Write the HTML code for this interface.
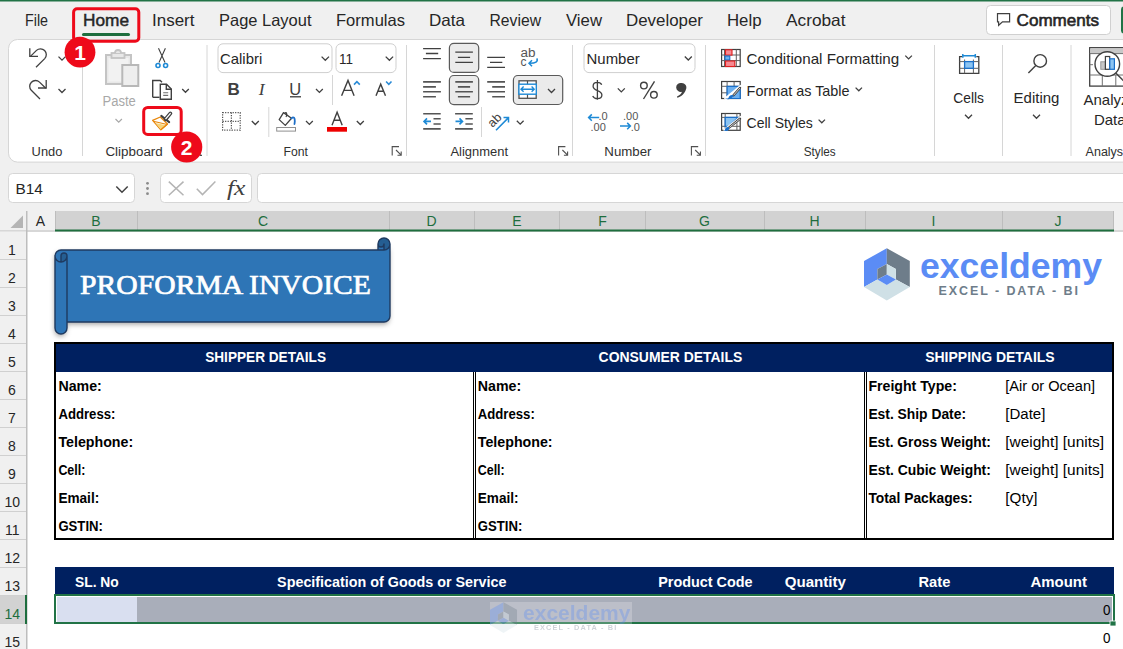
<!DOCTYPE html>
<html><head><meta charset="utf-8"><style>
html,body{margin:0;padding:0;background:#fff;}
#root{position:relative;width:1123px;height:649px;overflow:hidden;background:#fff;font-family:"Liberation Sans",sans-serif;}
svg{position:absolute;left:0;top:0;}
text{white-space:pre;}
</style></head><body><div id="root">
<svg width="1123" height="649" viewBox="0 0 1123 649">
<!-- top chrome background -->
<rect x="0" y="0" width="1123" height="232" fill="#f0f0f0"/>
<rect x="0" y="0" width="1123" height="1.5" fill="#217346"/>
<!-- comments button -->
<rect x="986.5" y="5.5" width="124" height="29" rx="4" fill="#ffffff" stroke="#d0d0d0" stroke-width="1"/>
<rect x="1121" y="6.5" width="8" height="27" rx="3" fill="#217346"/>
<!-- home tab highlight underline -->
<rect x="82" y="33" width="48" height="3" rx="1.5" fill="#1e6e3e"/>
<!-- ribbon panel -->
<rect x="8.5" y="39.5" width="1130" height="122.6" rx="9" fill="#ffffff" stroke="#d6d6d6" stroke-width="1"/>
<rect x="218" y="43.8" width="114" height="28.8" rx="5" fill="#fff" stroke="#cfcfcf" stroke-width="1"/>
<rect x="336" y="43.8" width="60" height="28.8" rx="5" fill="#fff" stroke="#cfcfcf" stroke-width="1"/>
<rect x="584" y="43.8" width="111" height="28.8" rx="5" fill="#fff" stroke="#cfcfcf" stroke-width="1"/>
<!-- group separators -->
<g stroke="#d6d6d6" stroke-width="1">
<line x1="82.5" y1="45" x2="82.5" y2="156"/>
<line x1="207" y1="45" x2="207" y2="156"/>
<line x1="406.5" y1="45" x2="406.5" y2="156"/>
<line x1="572.5" y1="45" x2="572.5" y2="156"/>
<line x1="705.5" y1="45" x2="705.5" y2="156"/>
<line x1="934.5" y1="45" x2="934.5" y2="156"/>
<line x1="1002.5" y1="45" x2="1002.5" y2="156"/>
<line x1="1071" y1="45" x2="1071" y2="156"/>
</g>
<!-- formula bar -->
<rect x="8.5" y="173.5" width="126" height="29" rx="4" fill="#ffffff" stroke="#d6d6d6"/>
<rect x="160.5" y="173.5" width="91" height="29" rx="4" fill="#ffffff" stroke="#d6d6d6"/>
<rect x="257.5" y="173.5" width="880" height="29" rx="4" fill="#ffffff" stroke="#d6d6d6"/>
<!-- column headers -->
<rect x="55" y="211" width="1059" height="20" fill="#d2d2d2"/>
<g stroke="#bdbdbd" stroke-width="1">
<line x1="55.5" y1="211" x2="55.5" y2="231"/>
<line x1="137.5" y1="211" x2="137.5" y2="231"/>
<line x1="389.5" y1="211" x2="389.5" y2="231"/>
<line x1="474.5" y1="211" x2="474.5" y2="231"/>
<line x1="559.5" y1="211" x2="559.5" y2="231"/>
<line x1="645.5" y1="211" x2="645.5" y2="231"/>
<line x1="764.5" y1="211" x2="764.5" y2="231"/>
<line x1="865.5" y1="211" x2="865.5" y2="231"/>
<line x1="1002.5" y1="211" x2="1002.5" y2="231"/>
<line x1="1113.5" y1="211" x2="1113.5" y2="231"/>
</g>
<rect x="0" y="230.5" width="1123" height="1" fill="#bdbdbd"/>
<rect x="55" y="229.5" width="1059" height="2" fill="#1e6e3e"/>
<polygon points="23,215.5 23,228 10.5,228" fill="#b4b4b4"/>
<!-- row headers -->
<rect x="0" y="231.5" width="26" height="420" fill="#f0f0f0"/>
<rect x="26" y="211" width="1.5" height="440" fill="#bdbdbd"/>
<g fill="#d0d0d0">
<rect x="0" y="259" width="26" height="1"/><rect x="0" y="287" width="26" height="1"/><rect x="0" y="315" width="26" height="1"/>
<rect x="0" y="343" width="26" height="1"/><rect x="0" y="371" width="26" height="1"/><rect x="0" y="399" width="26" height="1"/>
<rect x="0" y="427" width="26" height="1"/><rect x="0" y="455" width="26" height="1"/><rect x="0" y="483" width="26" height="1"/>
<rect x="0" y="511" width="26" height="1"/><rect x="0" y="539" width="26" height="1"/><rect x="0" y="567" width="26" height="1"/>
<rect x="0" y="595" width="26" height="1"/><rect x="0" y="623" width="26" height="1"/>
</g>
<rect x="0" y="596" width="25" height="27" fill="#d2d2d2"/>
<rect x="25" y="595" width="2" height="29" fill="#1e6e3e"/>

<!-- details table -->
<rect x="55" y="343" width="1058" height="196" fill="#ffffff" stroke="#000000" stroke-width="2"/>
<rect x="56" y="344" width="1056" height="28" fill="#002060"/>
<g fill="#000000">
<rect x="473" y="372" width="1" height="166"/><rect x="475" y="372" width="1" height="166"/>
<rect x="864" y="372" width="1" height="166"/><rect x="866" y="372" width="1" height="166"/>
</g>
<!-- items header -->
<rect x="55" y="567" width="1059" height="27" fill="#002060"/>
<!-- selection row 14 -->
<rect x="57" y="597" width="80" height="25" fill="#d9dff0"/>
<rect x="137" y="597" width="975" height="25" fill="#a9aeba"/>
<rect x="55" y="595" width="1059" height="28" fill="none" stroke="#217346" stroke-width="2"/>
<rect x="1110" y="621" width="6" height="5" fill="#217346" stroke="#ffffff" stroke-width="0.8"/>
<!-- banner -->
<defs>
<filter id="sh" x="-10%" y="-20%" width="120%" height="150%">
<feDropShadow dx="-0.5" dy="2.5" stdDeviation="2.5" flood-color="#000" flood-opacity="0.35"/>
</filter>
<g id="logo">
<polygon points="886.8,248.2 864,261.1 864,287 877.4,279.6 877.4,269 886.8,263.9" fill="#5b8cf5"/>
<polygon points="886.8,248.2 909.8,261.1 909.8,287 895.9,279.6 895.9,269 886.8,263.9" fill="#6e7d8a"/>
<polygon points="864,287 886.8,300.4 909.8,287 895.9,279.6 886.8,285.1 877.4,279.6" fill="#cfe0e6"/>
<polygon points="877.4,269 886.8,263.9 886.8,274.5 877.4,279.6" fill="#6e7d8a"/>
<polygon points="886.8,263.9 895.9,269 895.9,279.6 886.8,274.5" fill="#cfe0e6"/>
<polygon points="877.4,279.6 886.8,274.5 895.9,279.6 886.8,285.1" fill="#5b8cf5"/>
<text x="920" y="278.2" font-family="Liberation Sans" font-weight="700" font-size="35" fill="#5b8cf5" textLength="182" lengthAdjust="spacingAndGlyphs">exceldemy</text>
<text x="938.4" y="295.1" font-family="Liberation Sans" font-weight="700" font-size="12.5" fill="#6e7d8a" textLength="139.5" lengthAdjust="spacing">EXCEL - DATA - BI</text>
</g>
</defs>
<g transform="translate(55,238)" filter="url(#sh)">
<path d="M335,6 A6,6 0 0 1 329,12 L329,6 A3,3 0 0 1 323,6 L323,12 L6,12 A6,6 0 0 0 0,18 L0,90 A6,6 0 0 0 12,90 L12,84 L329,84 A6,6 0 0 0 335,78 Z M6,24 A6,6 0 0 0 12,18 A3,3 0 0 0 6,18 Z" fill="#2e75b6" fill-rule="nonzero"/>
</g>
<g transform="translate(55,238)">
<path d="M0,18 A6,6 0 0 1 6,12 L323,12 L323,6 A6,6 0 0 1 335,6 L335,78 A6,6 0 0 1 329,84 L12,84 L12,90 A6,6 0 0 1 0,90 Z" fill="#2e75b6"/>
<path d="M329,12 A6,6 0 1 0 323,6 A3,3 0 0 0 329,6 Z" fill="#255e92"/>
<path d="M6,24 A6,6 0 0 0 12,18 A3,3 0 0 0 6,18 Z" fill="#255e92"/>
<path d="M0,18 A6,6 0 0 1 6,12 L323,12 L323,6 A6,6 0 0 1 335,6 L335,78 A6,6 0 0 1 329,84 L12,84 L12,90 A6,6 0 0 1 0,90 Z M323,12 L329,12 A6,6 0 0 0 335,6 M329,12 L329,6 A3,3 0 0 1 323,6 M6,24 L6,18 A3,3 0 0 1 12,18 A6,6 0 0 1 0,18 M12,18 L12,84" fill="none" stroke="#1f3a60" stroke-width="1.4" stroke-linejoin="round"/>
</g>
<use href="#logo"/>
<!-- watermark -->
<rect x="490" y="602" width="142" height="31" fill="#ffffff" opacity="0.22"/>
<g opacity="0.33" transform="translate(-19.76,455.7) scale(0.59)"><use href="#logo"/></g>

<rect x="449.4" y="43.3" width="29.3" height="29.1" rx="4.5" fill="#ebebeb" stroke="#5a5a5a" stroke-width="1.2"/>
<rect x="449.4" y="75.5" width="29.3" height="29.1" rx="4.5" fill="#ebebeb" stroke="#5a5a5a" stroke-width="1.2"/>
<rect x="513.4" y="75.5" width="49.3" height="29" rx="4.5" fill="#ebebeb" stroke="#5a5a5a" stroke-width="1.2"/>
<g fill="none" stroke="#404040" stroke-width="1.3" stroke-linecap="butt" stroke-linejoin="miter">
<!-- undo -->
<path d="M29.8,48.3 V56.3 H38"/>
<path d="M30.2,56.6 L36.5,50.4 A5.8,5.8 0 0 1 44.7,58.6 L36,67.3"/>
<!-- redo -->
<path d="M46.2,80 V88 H38"/>
<path d="M45.8,88.3 L39.5,82.1 A5.8,5.8 0 0 0 31.3,90.3 L40,99"/>
<!-- chevrons -->
<path d="M58.5,56.6 L62,60.1 L65.5,56.6"/>
<path d="M58.5,89 L62,92.5 L65.5,89"/>
<path d="M182.2,89 L185.5,92.3 L188.8,89"/>
<path d="M321.6,56.6 L325.3,60.3 L329,56.6"/>
<path d="M385.7,56.6 L389.4,60.3 L393.1,56.6"/>
<path d="M316,89 L319.4,92.4 L322.8,89"/>
<path d="M251.8,121 L255.3,124.5 L258.8,121"/>
<path d="M306,121 L309.4,124.4 L312.8,121"/>
<path d="M356.8,121 L360.3,124.5 L363.8,121"/>
<path d="M548,89 L551.5,92.5 L555,89"/>
<path d="M516.8,120.8 L520.2,124.2 L523.6,120.8"/>
<path d="M684.8,56.5 L688.3,60 L691.8,56.5"/>
<path d="M617.8,88.4 L621.3,91.9 L624.8,88.4"/>
<path d="M905.3,55.6 L908.6,58.9 L911.9,55.6"/>
<path d="M855.6,87.6 L858.8,90.8 L862,87.6"/>
<path d="M818.6,119.6 L821.8,122.8 L825,119.6"/>
<path d="M965,114.8 L968.5,118.3 L972,114.8"/>
<path d="M1033,114.8 L1036.5,118.3 L1040,114.8"/>
<!-- name box chevron -->
<path d="M116.3,186.5 L122,192.2 L127.7,186.5" stroke-width="1.5"/>
</g>
<!-- paste -->
<g>
<rect x="106" y="55" width="25" height="29" fill="#e8e8e8" stroke="#c4c4c4" stroke-width="2"/>
<rect x="108.5" y="58" width="20" height="23.5" fill="#f2f2f2" stroke="none"/>
<rect x="111.5" y="53" width="13" height="5" fill="#e8e8e8" stroke="#c4c4c4" stroke-width="1.8"/>
<path d="M115,53 A3,3 0 0 1 121,53" fill="#e8e8e8" stroke="#c4c4c4" stroke-width="1.8"/>
<rect x="122.3" y="65" width="16" height="21" fill="#eeeeee" stroke="#b8b8b8" stroke-width="2"/>
<path d="M115.5,119 L118.7,122.2 L121.9,119" fill="none" stroke="#a8a8a8" stroke-width="1.2"/>
</g>
<!-- scissors -->
<g fill="none" stroke="#404040" stroke-width="1.1">
<path d="M158.5,48.2 L165,62.5 M165.4,48.2 L159,62.5"/>
</g>
<circle cx="158" cy="65.5" r="2" fill="#fff" stroke="#1e8ad6" stroke-width="1.6"/>
<circle cx="165.6" cy="65.5" r="2" fill="#fff" stroke="#1e8ad6" stroke-width="1.6"/>
<!-- copy -->
<g fill="#fff" stroke="#404040" stroke-width="1.4">
<path d="M152.7,97.3 V80.5 H160.2 L162,82.3"/>
<path d="M152.7,97.3 H159.5"/>
<path d="M160.3,99.3 V84.2 H166.5 L171.3,89 V99.3 Z"/>
<path d="M166.3,84.2 V89.2 H171.3" fill="none"/>
</g>
<path d="M163.2,92.7 H168.2 M163.2,95.4 H168.2" stroke="#707070" stroke-width="1.1"/>
<!-- format painter -->
<g>
<path d="M160.3,117 L152.6,120.4 L160.8,129.8 L167.5,124 Z" fill="#fff" stroke="#e8860a" stroke-width="1.2" stroke-linejoin="round"/>
<path d="M155.5,123 L166,125.2 L160.8,129.4 Z" fill="#f7d47c"/>
<path d="M153.3,121.2 L167.2,124.5" stroke="#e8860a" stroke-width="1.1"/>
<path d="M160.8,129.8 L167.5,124" stroke="#e8860a" stroke-width="1.2"/>
<path d="M161.3,115.9 L169.2,122.1" stroke="#404040" stroke-width="2" stroke-linecap="round"/>
<path d="M165.6,119.2 L170.4,113.4" stroke="#404040" stroke-width="3.8" stroke-linecap="round"/>
<path d="M165.9,118.6 L170.2,113.6" stroke="#ffffff" stroke-width="1.4" stroke-linecap="round"/>
</g>
<!-- B I U -->
<text x="227.5" y="94.8" font-family="Liberation Sans" font-weight="700" font-size="17" fill="#404040">B</text>
<text x="258.8" y="94.8" font-family="Liberation Serif" font-style="italic" font-size="17.5" fill="#404040">I</text>
<text x="289.3" y="94.6" font-family="Liberation Sans" font-size="16.5" fill="#404040">U</text>
<rect x="290" y="96" width="11" height="1.5" fill="#555"/>
<rect x="332" y="75" width="1" height="30" fill="#d6d6d6"/>
<!-- grow/shrink font -->
<g fill="none" stroke="#404040" stroke-width="1.4" stroke-linejoin="miter">
<path d="M341.6,95.8 L348,80.4 L354.1,95.8 M344,90.4 H352.2"/>
<path d="M376,95.8 L380.7,84.2 L385.5,95.8 M378,91.3 H383.4"/>
</g>
<g fill="none" stroke="#2b8bd6" stroke-width="1.6">
<path d="M354,84.6 L356.9,81.6 L359.8,84.6"/>
<path d="M386.1,81.5 L388.8,84.3 L391.5,81.5"/>
</g>
<!-- borders -->
<g stroke="#505050" stroke-width="1.2" stroke-dasharray="1.2,1.3" fill="none">
<rect x="222.6" y="112.6" width="17.6" height="17.6"/>
<path d="M231.4,112.6 V130.2 M222.6,121.4 H240.2"/>
</g>
<rect x="268.3" y="107" width="1" height="30" fill="#d6d6d6"/>
<!-- fill color -->
<g>
<path d="M283.5,112.6 L279.2,119.6 L285.3,125.4 L291.5,118.3 Z" fill="#fff" stroke="#404040" stroke-width="1.3" stroke-linejoin="round"/>
<path d="M285,113 C286.5,111.5 287.5,114.5 286,117" fill="none" stroke="#404040" stroke-width="1.2"/>
<path d="M291.5,118.3 C293.5,116 295,118 294.8,121.5 L294.5,124" fill="none" stroke="#1e6fc8" stroke-width="1.8" stroke-linecap="round"/>
<rect x="276.7" y="127.5" width="18.8" height="3.6" fill="#fff" stroke="#909090" stroke-width="1"/>
</g>
<!-- font color -->
<path d="M332,125.2 L337.1,112.2 L342.2,125.2 M334,120.3 H340.2" fill="none" stroke="#404040" stroke-width="1.4"/>
<rect x="327" y="127" width="20" height="4.7" fill="#ee0000"/>
<!-- launchers -->
<g fill="none" stroke="#505050" stroke-width="1.1">
<path d="M392.2,155.4 V146.6 H399 M396,150 L401.2,155.2 M401.2,151.5 V155.2 H397.5"/>
<path d="M558.6,155.4 V146.6 H565.4 M562.4,150 L567.6,155.2 M567.6,151.5 V155.2 H563.9"/>
<path d="M691.4,155.4 V146.6 H698.2 M695.2,150 L700.4,155.2 M700.4,151.5 V155.2 H696.7"/>
<path d="M200,155.4 V150 M200,155.4 H202"/>
</g>
<!-- alignment lines -->
<g stroke="#404040" stroke-width="1.3">
<path d="M423.1,48.6 H440.9 M425.9,53.5 H438.2 M423.1,58.6 H440.9"/>
<path d="M487.2,57.3 H505 M490,62.4 H502.3 M487.2,67.4 H505"/>
</g>
<g stroke="#404040" stroke-width="1.3">
<path d="M455.3,52.2 H472.9 M457.9,57.3 H470.1 M455.3,62.4 H472.9"/>
</g>
<g stroke="#555555" stroke-width="1.6">
<path d="M423.1,81.9 H440.9 M423.1,86.9 H435.9 M423.1,91.8 H440.9 M423.1,96.7 H435.9"/>
<path d="M455.3,81.9 H472.9 M457.9,86.9 H470.1 M455.3,91.8 H472.9 M457.9,96.7 H470.1"/>
<path d="M487.2,81.9 H505 M492.2,86.9 H505 M487.2,91.8 H505 M492.2,96.7 H505"/>
<path d="M423.2,113.8 H440.7 M433.5,118.8 H440.7 M433.5,124 H440.7 M423.2,128.9 H440.7"/>
<path d="M455.1,113.8 H472.8 M465.4,118.8 H472.8 M465.4,124 H472.8 M455.1,128.9 H472.8"/>
</g>
<g fill="none" stroke="#1e8ad6" stroke-width="1.6">
<path d="M431,121.4 H424 M427,118.4 L424,121.4 L427,124.4"/>
<path d="M455.5,121.4 H462.5 M459.5,118.4 L462.5,121.4 L459.5,124.4"/>
</g>
<rect x="481" y="107" width="1" height="30" fill="#d6d6d6"/>
<!-- wrap text -->
<text x="520.6" y="57.3" font-family="Liberation Sans" font-size="12" fill="#555" textLength="15" lengthAdjust="spacingAndGlyphs">ab</text>
<text x="520.6" y="66.2" font-family="Liberation Sans" font-size="12" fill="#555">c</text>
<path d="M536.8,58.4 C538.5,61.5 535.5,63.4 529.4,63.3 M532,60.3 L529,63.3 L532,66.3" fill="none" stroke="#1e8ad6" stroke-width="1.5"/>
<!-- merge center icon -->
<g>
<rect x="519" y="80.8" width="17.2" height="17.5" fill="#fff" stroke="#505050" stroke-width="1.3"/>
<path d="M527.5,80.8 V98.3" stroke="#505050" stroke-width="1.2"/>
<rect x="518.9" y="84.2" width="17.4" height="10" fill="#fff" stroke="#1e8ad6" stroke-width="1.4"/>
<path d="M521,89.2 H534.2 M523.6,86.6 L521,89.2 L523.6,91.8 M531.6,86.6 L534.2,89.2 L531.6,91.8" fill="none" stroke="#1e8ad6" stroke-width="1.4"/>
</g>
<!-- orientation -->
<text x="0" y="0" font-family="Liberation Sans" font-size="12.5" fill="#404040" transform="translate(492.5,128) rotate(-45)">ab</text>
<path d="M496,130.3 L508.5,117.6 M503.5,117.6 H508.5 V122.6" fill="none" stroke="#1e8ad6" stroke-width="1.5"/>
<!-- number -->
<path d="M597.4,79.9 V99.7 M601.7,84.7 C601,83.2 599.5,82.4 597.4,82.4 C594.6,82.4 593.1,84 593.1,86.2 C593.1,91.6 601.9,89.6 601.9,95.1 C601.9,97.4 600,98.7 597.4,98.7 C595.1,98.7 593.5,97.7 592.7,96" fill="none" stroke="#404040" stroke-width="1.3"/>
<g fill="none" stroke="#404040" stroke-width="1.4">
<circle cx="643.9" cy="85.6" r="3.3"/>
<circle cx="653.9" cy="94.8" r="3.3"/>
<path d="M654.5,81.4 L643.5,99"/>
</g>
<path d="M681.6,83 A4.5,4.5 0 0 1 685.9,89.5 C684.8,93.5 681.5,96.5 677.3,97.7 L677,96.6 C679.6,95.3 681.3,93.6 682,91.7 A4.5,4.5 0 1 1 681.6,83 Z" fill="#404040"/>
<g font-family="Liberation Sans" font-size="11" fill="#555">
<text x="598.5" y="120.2">.0</text>
<text x="590.5" y="130.8">.00</text>
<text x="623" y="120.2">.00</text>
<text x="630.8" y="130.8">.0</text>
</g>
<g fill="none" stroke="#1e8ad6" stroke-width="1.5">
<path d="M599.2,117.6 H588.6 M591.8,114.4 L588.6,117.6 L591.8,120.8"/>
<path d="M620,126.1 H630.4 M627.2,122.9 L630.4,126.1 L627.2,129.3"/>
</g>
<!-- conditional formatting icon -->
<g>
<rect x="721.6" y="49.5" width="18.6" height="17" fill="#fff" stroke="#404040" stroke-width="1.2"/>
<path d="M721.6,55 H740.2 M721.6,60.6 H740.2 M724.5,49.5 V66.5 M736.3,49.5 V66.5" stroke="#606060" stroke-width="1"/>
<rect x="725.5" y="49.8" width="6.5" height="5.3" fill="#f78a92" stroke="#e02020" stroke-width="1.1"/>
<rect x="725" y="56" width="4.8" height="4" fill="#6cb0f0" stroke="#1a6fc9" stroke-width="1.1"/>
<rect x="725.5" y="61" width="9.3" height="5.5" fill="#f78a92" stroke="#e02020" stroke-width="1.1"/>
</g>
<!-- format as table icon -->
<g>
<rect x="721.6" y="81.5" width="18.6" height="17" fill="#fff" stroke="#404040" stroke-width="1.2"/>
<path d="M721.6,86.3 H740.2 M721.6,92.8 H740.2 M727.1,81.5 V98.5 M734.1,81.5 V98.5" stroke="#606060" stroke-width="1"/>
<path d="M727.1,86.3 H740.2 V98.5 H727.1 Z" fill="#6cb0f0" stroke="#1a6fc9" stroke-width="1.2"/>
<path d="M741.5,86 L725,99.5" stroke="#fff" stroke-width="3.5"/>
<path d="M740,88 L733.5,95.3" stroke="#404040" stroke-width="2.4" stroke-linecap="round"/>
<path d="M740,88 L733.5,95.3" stroke="#fff" stroke-width="0.8"/>
<path d="M733.5,95.3 C731,94 728.5,96.5 728.5,98 C727.5,98.6 726,98.6 725,98.3 C727,100 732,100 733.5,95.3 Z" fill="#1a6fc9"/>
</g>
<!-- cell styles icon -->
<g>
<rect x="721.6" y="113.5" width="18.6" height="16.8" fill="#fff" stroke="#404040" stroke-width="1.2"/>
<path d="M721.6,117.4 H740.2 M721.6,126.3 H740.2 M725.2,113.5 V130.3 M736.9,113.5 V130.3" stroke="#606060" stroke-width="1"/>
<path d="M725.2,117.4 H738 L729,126.3 H725.2 Z" fill="#8cc4f2" stroke="#1a6fc9" stroke-width="1.3"/>
<path d="M741.5,117 L724,131" stroke="#fff" stroke-width="3.5"/>
<path d="M740,118.8 L729.3,127.4" stroke="#404040" stroke-width="2.4" stroke-linecap="round"/>
<path d="M740,118.8 L729.3,127.4" stroke="#fff" stroke-width="0.8"/>
<path d="M729.3,127.4 C726.5,126.3 725,128.5 725,129.7 C724.5,130.2 723.5,130.3 723.2,130.1 C725,131.8 729.5,131.5 729.3,127.4 Z" fill="#1a6fc9"/>
</g>
<!-- cells icon -->
<g>
<path d="M962,56.6 H959.6 V73.3 H978.8 V56.6 H976.3" fill="#fff" stroke="#404040" stroke-width="1.3"/>
<path d="M959.6,61.6 H978.8 M959.6,68.3 H978.8 M964.6,59.5 V73.3 M973.4,59.5 V73.3" stroke="#606060" stroke-width="1"/>
<rect x="964.6" y="61.6" width="8.8" height="6.7" fill="#8cc4f2" stroke="#1a6fc9" stroke-width="1.3"/>
<path d="M962.8,55.8 H975.3 M962.8,54 V57.7 M975.3,54 V57.7" stroke="#1e8ad6" stroke-width="1.5"/>
</g>
<!-- editing magnifier -->
<g fill="none" stroke="#404040" stroke-width="1.4">
<circle cx="1040.2" cy="60.9" r="6.3"/>
<path d="M1035.8,65.5 L1028.4,73"/>
</g>
<!-- analyze data -->
<g>
<rect x="1089.7" y="47.7" width="40" height="38.4" fill="#fff" stroke="#404040" stroke-width="1.3"/>
<rect x="1090.3" y="48.3" width="40" height="5.2" fill="#c8c8c8"/>
<path d="M1089.7,53.6 H1130 M1089.7,75 H1130 M1102.3,75 V86 M1115.8,75 V86 M1089.7,64.7 H1093" stroke="#707070" stroke-width="1"/>
<circle cx="1107.3" cy="64" r="12.3" fill="#fff" stroke="#404040" stroke-width="1.4"/>
<path d="M1116,73.2 L1124,81.3" stroke="#404040" stroke-width="1.5"/>
<rect x="1100.8" y="61.8" width="4.6" height="7.5" fill="#c8c8c8" stroke="#999" stroke-width="1"/>
<rect x="1105.4" y="56.5" width="4.3" height="12.8" fill="#fff" stroke="#404040" stroke-width="1.2"/>
<rect x="1109.8" y="58.8" width="4.6" height="10.5" fill="#8cc4f2" stroke="#1a6fc9" stroke-width="1.2"/>
</g>
<!-- formula bar icons -->
<g fill="none" stroke="#b4b4b4" stroke-width="1.5">
<path d="M168.8,181.6 L183.5,195.2 M183.5,181.6 L168.8,195.2"/>
<path d="M196.8,188.8 L202.5,194.6 L215.4,181.4"/>
</g>
<circle cx="147.5" cy="183.3" r="1.4" fill="#8a8a8a"/>
<circle cx="147.5" cy="188.5" r="1.4" fill="#8a8a8a"/>
<circle cx="147.5" cy="193.7" r="1.4" fill="#8a8a8a"/>
<text x="227" y="195" font-family="Liberation Serif" font-style="italic" font-size="20" fill="#404040" textLength="18.5" lengthAdjust="spacingAndGlyphs">fx</text>
<!-- comment icon -->
<path d="M997.5,13.6 H1009.6 V21.8 H1002.5 L998.6,25.3 V21.8 H997.5 Z" fill="none" stroke="#404040" stroke-width="1.2" stroke-linejoin="miter"/>

<text x="25" y="26" font-size="16.5" font-weight="400" fill="#262626" font-family="Liberation Sans" textLength="23" lengthAdjust="spacingAndGlyphs" >File</text>
<text x="83" y="26" font-size="16.5" font-weight="400" fill="#262626" font-family="Liberation Sans" textLength="46" lengthAdjust="spacingAndGlyphs" stroke="#262626" stroke-width="0.45">Home</text>
<text x="152" y="26" font-size="16.5" font-weight="400" fill="#262626" font-family="Liberation Sans" textLength="42.5" lengthAdjust="spacingAndGlyphs" >Insert</text>
<text x="219" y="26" font-size="16.5" font-weight="400" fill="#262626" font-family="Liberation Sans" textLength="92.5" lengthAdjust="spacingAndGlyphs" >Page Layout</text>
<text x="336" y="26" font-size="16.5" font-weight="400" fill="#262626" font-family="Liberation Sans" textLength="69" lengthAdjust="spacingAndGlyphs" >Formulas</text>
<text x="429" y="26" font-size="16.5" font-weight="400" fill="#262626" font-family="Liberation Sans" textLength="36" lengthAdjust="spacingAndGlyphs" >Data</text>
<text x="489.5" y="26" font-size="16.5" font-weight="400" fill="#262626" font-family="Liberation Sans" textLength="51.5" lengthAdjust="spacingAndGlyphs" >Review</text>
<text x="566" y="26" font-size="16.5" font-weight="400" fill="#262626" font-family="Liberation Sans" textLength="36" lengthAdjust="spacingAndGlyphs" >View</text>
<text x="626" y="26" font-size="16.5" font-weight="400" fill="#262626" font-family="Liberation Sans" textLength="77" lengthAdjust="spacingAndGlyphs" >Developer</text>
<text x="727" y="26" font-size="16.5" font-weight="400" fill="#262626" font-family="Liberation Sans" textLength="34.5" lengthAdjust="spacingAndGlyphs" >Help</text>
<text x="786" y="26" font-size="16.5" font-weight="400" fill="#262626" font-family="Liberation Sans" textLength="59.5" lengthAdjust="spacingAndGlyphs" >Acrobat</text>
<text x="1016.6" y="26" font-size="16.5" font-weight="400" fill="#262626" font-family="Liberation Sans" textLength="82.4" lengthAdjust="spacingAndGlyphs" stroke="#262626" stroke-width="0.6">Comments</text>
<text x="31.6" y="156" font-size="12.5" font-weight="400" fill="#303030" font-family="Liberation Sans" textLength="30.8" lengthAdjust="spacingAndGlyphs" >Undo</text>
<text x="105.4" y="156" font-size="12.5" font-weight="400" fill="#303030" font-family="Liberation Sans" textLength="57.4" lengthAdjust="spacingAndGlyphs" >Clipboard</text>
<text x="283.6" y="156" font-size="12.5" font-weight="400" fill="#303030" font-family="Liberation Sans" textLength="24.4" lengthAdjust="spacingAndGlyphs" >Font</text>
<text x="450.4" y="156" font-size="12.5" font-weight="400" fill="#303030" font-family="Liberation Sans" textLength="57.6" lengthAdjust="spacingAndGlyphs" >Alignment</text>
<text x="604.3" y="156" font-size="12.5" font-weight="400" fill="#303030" font-family="Liberation Sans" textLength="47.2" lengthAdjust="spacingAndGlyphs" >Number</text>
<text x="803.7" y="156" font-size="12.5" font-weight="400" fill="#303030" font-family="Liberation Sans" textLength="32" lengthAdjust="spacingAndGlyphs" >Styles</text>
<text x="1085.6" y="156" font-size="12.5" font-weight="400" fill="#303030" font-family="Liberation Sans" >Analysis</text>
<text x="102.5" y="106.4" font-size="14" font-weight="400" fill="#a8a8a8" font-family="Liberation Sans" textLength="33.3" lengthAdjust="spacingAndGlyphs" >Paste</text>
<text x="220" y="64.1" font-size="15" font-weight="400" fill="#262626" font-family="Liberation Sans" textLength="42.2" lengthAdjust="spacingAndGlyphs" >Calibri</text>
<text x="339" y="64.1" font-size="15" font-weight="400" fill="#262626" font-family="Liberation Sans" textLength="14" lengthAdjust="spacingAndGlyphs" >11</text>
<text x="586.6" y="64.1" font-size="15" font-weight="400" fill="#262626" font-family="Liberation Sans" textLength="53.1" lengthAdjust="spacingAndGlyphs" >Number</text>
<text x="746.6" y="63.9" font-size="15" font-weight="400" fill="#262626" font-family="Liberation Sans" textLength="152.6" lengthAdjust="spacingAndGlyphs" >Conditional Formatting</text>
<text x="746.6" y="96" font-size="15" font-weight="400" fill="#262626" font-family="Liberation Sans" textLength="103" lengthAdjust="spacingAndGlyphs" >Format as Table</text>
<text x="746.6" y="128" font-size="15" font-weight="400" fill="#262626" font-family="Liberation Sans" textLength="66.2" lengthAdjust="spacingAndGlyphs" >Cell Styles</text>
<text x="953.3" y="103.2" font-size="15" font-weight="400" fill="#262626" font-family="Liberation Sans" textLength="30.7" lengthAdjust="spacingAndGlyphs" >Cells</text>
<text x="1013.6" y="103.2" font-size="15" font-weight="400" fill="#262626" font-family="Liberation Sans" textLength="45.8" lengthAdjust="spacingAndGlyphs" >Editing</text>
<text x="1083.5" y="104.7" font-size="15" font-weight="400" fill="#262626" font-family="Liberation Sans" >Analyze</text>
<text x="1093.9" y="124.9" font-size="15" font-weight="400" fill="#262626" font-family="Liberation Sans" >Data</text>
<text x="15.5" y="194.1" font-size="15" font-weight="400" fill="#262626" font-family="Liberation Sans" textLength="27.4" lengthAdjust="spacingAndGlyphs" >B14</text>
<text x="40.5" y="226" font-size="14" font-weight="400" fill="#262626" font-family="Liberation Sans" text-anchor="middle" >A</text>
<text x="96.0" y="226" font-size="14" font-weight="400" fill="#1e6e3e" font-family="Liberation Sans" text-anchor="middle" >B</text>
<text x="263.0" y="226" font-size="14" font-weight="400" fill="#1e6e3e" font-family="Liberation Sans" text-anchor="middle" >C</text>
<text x="431.5" y="226" font-size="14" font-weight="400" fill="#1e6e3e" font-family="Liberation Sans" text-anchor="middle" >D</text>
<text x="517.0" y="226" font-size="14" font-weight="400" fill="#1e6e3e" font-family="Liberation Sans" text-anchor="middle" >E</text>
<text x="602.5" y="226" font-size="14" font-weight="400" fill="#1e6e3e" font-family="Liberation Sans" text-anchor="middle" >F</text>
<text x="704.5" y="226" font-size="14" font-weight="400" fill="#1e6e3e" font-family="Liberation Sans" text-anchor="middle" >G</text>
<text x="814.5" y="226" font-size="14" font-weight="400" fill="#1e6e3e" font-family="Liberation Sans" text-anchor="middle" >H</text>
<text x="933.5" y="226" font-size="14" font-weight="400" fill="#1e6e3e" font-family="Liberation Sans" text-anchor="middle" >I</text>
<text x="1058.0" y="226" font-size="14" font-weight="400" fill="#1e6e3e" font-family="Liberation Sans" text-anchor="middle" >J</text>
<text x="12" y="255" font-size="14" font-weight="400" fill="#262626" font-family="Liberation Sans" text-anchor="middle" >1</text>
<text x="12" y="283" font-size="14" font-weight="400" fill="#262626" font-family="Liberation Sans" text-anchor="middle" >2</text>
<text x="12" y="311" font-size="14" font-weight="400" fill="#262626" font-family="Liberation Sans" text-anchor="middle" >3</text>
<text x="12" y="339" font-size="14" font-weight="400" fill="#262626" font-family="Liberation Sans" text-anchor="middle" >4</text>
<text x="12" y="367" font-size="14" font-weight="400" fill="#262626" font-family="Liberation Sans" text-anchor="middle" >5</text>
<text x="12" y="395" font-size="14" font-weight="400" fill="#262626" font-family="Liberation Sans" text-anchor="middle" >6</text>
<text x="12" y="423" font-size="14" font-weight="400" fill="#262626" font-family="Liberation Sans" text-anchor="middle" >7</text>
<text x="12" y="451" font-size="14" font-weight="400" fill="#262626" font-family="Liberation Sans" text-anchor="middle" >8</text>
<text x="12" y="479" font-size="14" font-weight="400" fill="#262626" font-family="Liberation Sans" text-anchor="middle" >9</text>
<text x="12.3" y="507" font-size="14" font-weight="400" fill="#262626" font-family="Liberation Sans" text-anchor="middle" >10</text>
<text x="12.3" y="535" font-size="14" font-weight="400" fill="#262626" font-family="Liberation Sans" text-anchor="middle" >11</text>
<text x="12.3" y="563" font-size="14" font-weight="400" fill="#262626" font-family="Liberation Sans" text-anchor="middle" >12</text>
<text x="12.3" y="591" font-size="14" font-weight="400" fill="#262626" font-family="Liberation Sans" text-anchor="middle" >13</text>
<text x="12.3" y="619" font-size="14" font-weight="400" fill="#1e6e3e" font-family="Liberation Sans" text-anchor="middle" >14</text>
<text x="12.3" y="647" font-size="14" font-weight="400" fill="#262626" font-family="Liberation Sans" text-anchor="middle" >15</text>
<text x="80" y="294" font-size="28" font-weight="400" fill="#ffffff" font-family="Liberation Serif" textLength="291" lengthAdjust="spacingAndGlyphs" stroke="#ffffff" stroke-width="0.7">PROFORMA INVOICE</text>
<text x="205.2" y="362.4" font-size="14" font-weight="700" fill="#ffffff" font-family="Liberation Sans" textLength="120.8" lengthAdjust="spacingAndGlyphs" >SHIPPER DETAILS</text>
<text x="598.6" y="362.4" font-size="14" font-weight="700" fill="#ffffff" font-family="Liberation Sans" textLength="143.7" lengthAdjust="spacingAndGlyphs" >CONSUMER DETAILS</text>
<text x="925.2" y="362.4" font-size="14" font-weight="700" fill="#ffffff" font-family="Liberation Sans" textLength="129.5" lengthAdjust="spacingAndGlyphs" >SHIPPING DETAILS</text>
<text x="58.4" y="391" font-size="14" font-weight="700" fill="#000000" font-family="Liberation Sans" textLength="43.4" lengthAdjust="spacingAndGlyphs" >Name:</text>
<text x="477.8" y="391" font-size="14" font-weight="700" fill="#000000" font-family="Liberation Sans" textLength="43.4" lengthAdjust="spacingAndGlyphs" >Name:</text>
<text x="58.4" y="419" font-size="14" font-weight="700" fill="#000000" font-family="Liberation Sans" textLength="57" lengthAdjust="spacingAndGlyphs" >Address:</text>
<text x="477.8" y="419" font-size="14" font-weight="700" fill="#000000" font-family="Liberation Sans" textLength="57" lengthAdjust="spacingAndGlyphs" >Address:</text>
<text x="58.4" y="447" font-size="14" font-weight="700" fill="#000000" font-family="Liberation Sans" textLength="74.8" lengthAdjust="spacingAndGlyphs" >Telephone:</text>
<text x="477.8" y="447" font-size="14" font-weight="700" fill="#000000" font-family="Liberation Sans" textLength="74.8" lengthAdjust="spacingAndGlyphs" >Telephone:</text>
<text x="58.4" y="475" font-size="14" font-weight="700" fill="#000000" font-family="Liberation Sans" textLength="26.9" lengthAdjust="spacingAndGlyphs" >Cell:</text>
<text x="477.8" y="475" font-size="14" font-weight="700" fill="#000000" font-family="Liberation Sans" textLength="26.9" lengthAdjust="spacingAndGlyphs" >Cell:</text>
<text x="58.4" y="503" font-size="14" font-weight="700" fill="#000000" font-family="Liberation Sans" textLength="40.8" lengthAdjust="spacingAndGlyphs" >Email:</text>
<text x="477.8" y="503" font-size="14" font-weight="700" fill="#000000" font-family="Liberation Sans" textLength="40.8" lengthAdjust="spacingAndGlyphs" >Email:</text>
<text x="58.4" y="531" font-size="14" font-weight="700" fill="#000000" font-family="Liberation Sans" textLength="44.5" lengthAdjust="spacingAndGlyphs" >GSTIN:</text>
<text x="477.8" y="531" font-size="14" font-weight="700" fill="#000000" font-family="Liberation Sans" textLength="44.5" lengthAdjust="spacingAndGlyphs" >GSTIN:</text>
<text x="868.4" y="391" font-size="14" font-weight="700" fill="#000000" font-family="Liberation Sans" textLength="88.5" lengthAdjust="spacingAndGlyphs" >Freight Type:</text>
<text x="1005.3" y="391" font-size="14" font-weight="400" fill="#000000" font-family="Liberation Sans" textLength="89.8" lengthAdjust="spacingAndGlyphs" >[Air or Ocean]</text>
<text x="868.4" y="419" font-size="14" font-weight="700" fill="#000000" font-family="Liberation Sans" textLength="97.6" lengthAdjust="spacingAndGlyphs" >Est. Ship Date:</text>
<text x="1005.3" y="419" font-size="14" font-weight="400" fill="#000000" font-family="Liberation Sans" textLength="40.1" lengthAdjust="spacingAndGlyphs" >[Date]</text>
<text x="868.4" y="447" font-size="14" font-weight="700" fill="#000000" font-family="Liberation Sans" textLength="122.5" lengthAdjust="spacingAndGlyphs" >Est. Gross Weight:</text>
<text x="1005.3" y="447" font-size="14" font-weight="400" fill="#000000" font-family="Liberation Sans" textLength="98.7" lengthAdjust="spacingAndGlyphs" >[weight] [units]</text>
<text x="868.4" y="475" font-size="14" font-weight="700" fill="#000000" font-family="Liberation Sans" textLength="122.5" lengthAdjust="spacingAndGlyphs" >Est. Cubic Weight:</text>
<text x="1005.3" y="475" font-size="14" font-weight="400" fill="#000000" font-family="Liberation Sans" textLength="98.7" lengthAdjust="spacingAndGlyphs" >[weight] [units]</text>
<text x="868.4" y="503" font-size="14" font-weight="700" fill="#000000" font-family="Liberation Sans" textLength="104.2" lengthAdjust="spacingAndGlyphs" >Total Packages:</text>
<text x="1005.3" y="503" font-size="14" font-weight="400" fill="#000000" font-family="Liberation Sans" textLength="32.2" lengthAdjust="spacingAndGlyphs" >[Qty]</text>
<text x="75" y="587" font-size="14" font-weight="700" fill="#ffffff" font-family="Liberation Sans" textLength="43.7" lengthAdjust="spacingAndGlyphs" >SL. No</text>
<text x="277.1" y="587" font-size="14" font-weight="700" fill="#ffffff" font-family="Liberation Sans" textLength="229.4" lengthAdjust="spacingAndGlyphs" >Specification of Goods or Service</text>
<text x="658.2" y="587" font-size="14" font-weight="700" fill="#ffffff" font-family="Liberation Sans" textLength="94.4" lengthAdjust="spacingAndGlyphs" >Product Code</text>
<text x="784.7" y="587" font-size="14" font-weight="700" fill="#ffffff" font-family="Liberation Sans" textLength="61.2" lengthAdjust="spacingAndGlyphs" >Quantity</text>
<text x="918.5" y="587" font-size="14" font-weight="700" fill="#ffffff" font-family="Liberation Sans" textLength="31.8" lengthAdjust="spacingAndGlyphs" >Rate</text>
<text x="1030.5" y="587" font-size="14" font-weight="700" fill="#ffffff" font-family="Liberation Sans" textLength="56.5" lengthAdjust="spacingAndGlyphs" >Amount</text>
<text x="1103" y="614.8" font-size="14" font-weight="400" fill="#000000" font-family="Liberation Sans" textLength="7.5" lengthAdjust="spacingAndGlyphs" >0</text>
<text x="1103" y="643" font-size="14" font-weight="400" fill="#000000" font-family="Liberation Sans" textLength="7.5" lengthAdjust="spacingAndGlyphs" >0</text>
<rect x="73.6" y="8.8" width="65.2" height="32.4" rx="3.5" fill="none" stroke="#ee0a1a" stroke-width="3"/>
<circle cx="80" cy="52.2" r="15.4" fill="#ee0a1a"/>
<text x="80" y="60.1" font-family="Liberation Sans" font-weight="700" font-size="21" fill="#fff" text-anchor="middle">1</text>
<rect x="143.7" y="107.4" width="37.5" height="27" rx="4" fill="none" stroke="#ee0a1a" stroke-width="3"/>
<circle cx="186.7" cy="147" r="15.6" fill="#ee0a1a"/>
<text x="186.7" y="154.8" font-family="Liberation Sans" font-weight="700" font-size="21" fill="#fff" text-anchor="middle">2</text>

</svg>
</div></body></html>
